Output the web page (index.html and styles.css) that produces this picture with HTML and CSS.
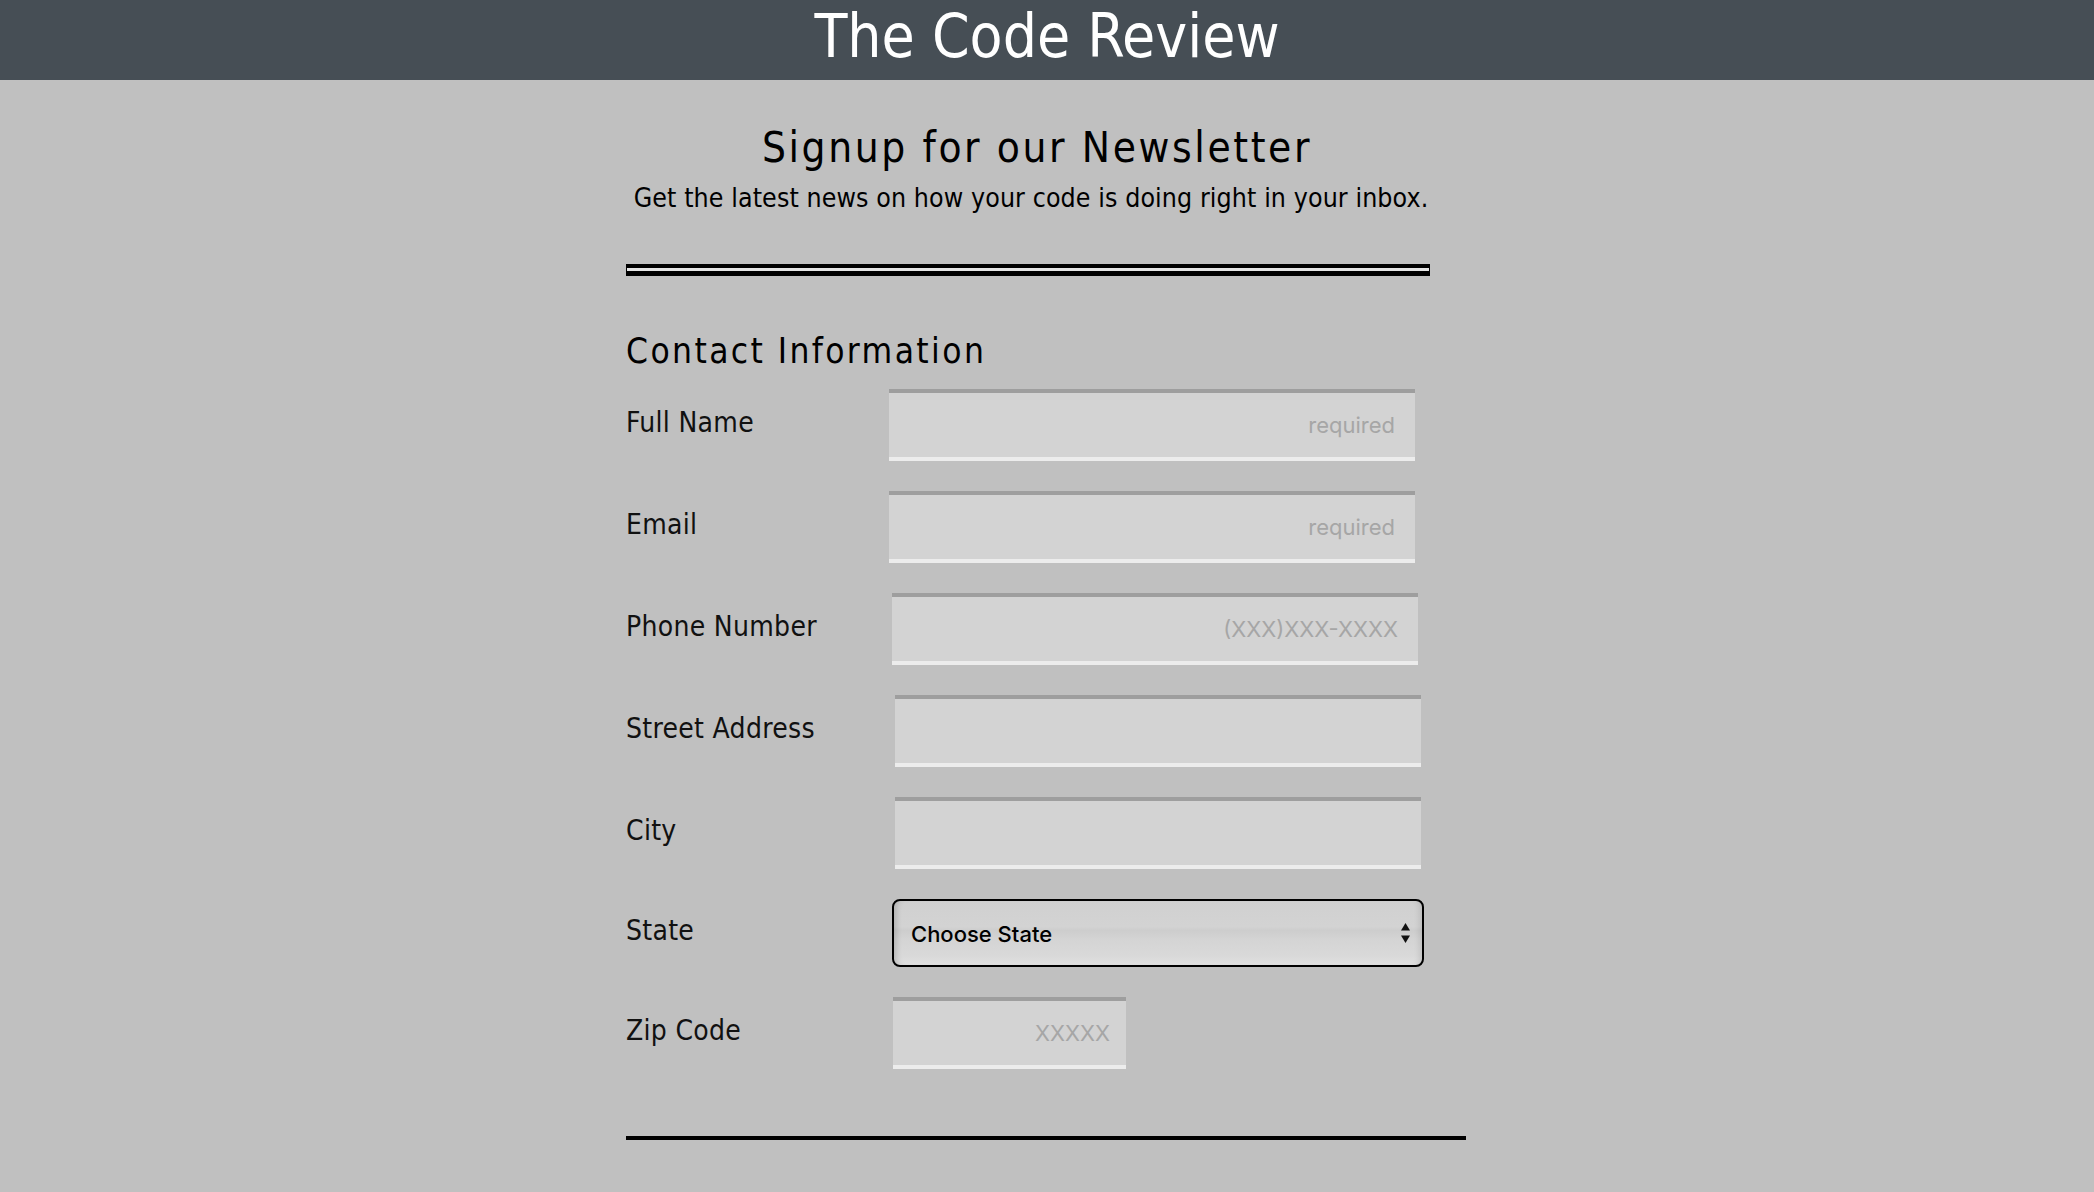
FILE: index.html
```html
<!DOCTYPE html>
<html lang="en">
<head>
<meta charset="utf-8">
<title>The Code Review</title>
<link rel="stylesheet" href="styles.css">
</head>
<body>
<header class="site-header">
  <h1 class="site-title">The Code Review</h1>
</header>
<main class="main">
  <div class="intro">
    <h2 class="intro-title">Signup for our Newsletter</h2>
    <p class="intro-text">Get the latest news on how your code is doing right in your inbox.</p>
  </div>
  <hr class="double-rule">
  <h3 class="section-title">Contact Information</h3>
  <form class="form">
    <div class="row">
      <label class="label" for="name">Full Name</label>
      <input class="field" id="name" type="text" placeholder="required">
    </div>
    <div class="row">
      <label class="label" for="email">Email</label>
      <input class="field" id="email" type="email" placeholder="required">
    </div>
    <div class="row row-b">
      <label class="label" for="phone">Phone Number</label>
      <input class="field" id="phone" type="tel" placeholder="(XXX)XXX-XXXX">
    </div>
    <div class="row row-c">
      <label class="label" for="street">Street Address</label>
      <input class="field" id="street" type="text">
    </div>
    <div class="row row-c">
      <label class="label" for="city">City</label>
      <input class="field" id="city" type="text">
    </div>
    <div class="row row-b row-select">
      <label class="label" for="state">State</label>
      <div class="select-wrap">
        <select class="select" id="state">
          <option>Choose State</option>
        </select>
        <svg class="select-arrow" width="11" height="22" viewBox="0 0 11 22"><path d="M5.5 1 L10 8.5 L1 8.5 Z" fill="#111"/><path d="M5.5 21 L10 13.5 L1 13.5 Z" fill="#111"/></svg>
      </div>
    </div>
    <div class="row row-z">
      <label class="label" for="zip">Zip Code</label>
      <input class="field field-zip" id="zip" type="text" placeholder="XXXXX">
    </div>
  </form>
  <hr class="bottom-rule">
</main>
</body>
</html>
```

FILE: styles.css
```css
html, body {
  margin: 0;
  padding: 0;
}
body {
  background: #c0c0c0;
  font-family: "DejaVu Sans Condensed", "DejaVu Sans", sans-serif;
  color: #000;
  min-height: 1192px;
}
.site-header {
  background: #464e55;
  height: 80px;
  box-sizing: border-box;
  padding-bottom: 8px;
}
.site-title {
  margin: 0;
  text-align: center;
  color: #fff;
  font-weight: normal;
  font-size: 60px;
  line-height: 72px;
  letter-spacing: 0;
}
.main {
  margin-left: 626px;
  width: 840px;
}
.intro {
  width: 804px;
  text-align: center;
  padding-left: 18px;
  box-sizing: border-box;
}
.intro-title {
  margin: 43px 0 0;
  font-weight: normal;
  font-size: 42px;
  line-height: 50px;
  letter-spacing: 2.6px;
}
.intro-text {
  margin: 7px 0 0 -12px;
  font-size: 26.5px;
  line-height: 36px;
  letter-spacing: 0.1px;
  white-space: nowrap;
}
.double-rule {
  margin: 48px 0 0;
  width: 802px;
  height: 3px;
  box-sizing: content-box;
  background: #e4e4e4;
  border: 1px solid #000;
  border-top-width: 4px;
  border-bottom-width: 5px;
  padding: 0;
}
.section-title {
  margin: 53px 0 0;
  font-weight: normal;
  font-size: 35px;
  line-height: 44px;
  letter-spacing: 2.4px;
}
.form {
  margin-top: 16px;
  display: flex;
  flex-direction: column;
  gap: 30px;
}
.row {
  display: grid;
  grid-template-columns: 263px auto;
  align-items: center;
  justify-items: start;
}
.row-b { grid-template-columns: 266px auto; }
.row-c { grid-template-columns: 269px auto; }
.row-z { grid-template-columns: 267px auto; }
.label {
  font-size: 28px;
  line-height: 36px;
  letter-spacing: 0.3px;
  color: #111;
  margin-bottom: 4px;
}
.field {
  width: 526px;
  height: 72px;
  box-sizing: border-box;
  margin: 0;
  background: #d3d3d3;
  border: 0;
  border-top: 4px solid #9e9e9e;
  border-bottom: 4px solid #ececec;
  padding: 0 20px 0 14px;
  text-align: right;
  font-family: Inter, "Open Sans", sans-serif;
  font-size: 22px;
  color: #222;
  outline: none;
}
.field::placeholder {
  color: #a6a6a6;
  opacity: 1;
}
.field-zip {
  width: 233px;
  padding-right: 16px;
}
.select-wrap {
  position: relative;
  width: 532px;
  height: 68px;
}
.select {
  appearance: none;
  -webkit-appearance: none;
  width: 532px;
  height: 68px;
  box-sizing: border-box;
  margin: 0;
  border: 2px solid #000;
  border-radius: 8px;
  padding: 2px 40px 0 17px;
  font-family: Inter, "Open Sans", sans-serif;
  font-size: 22px;
  font-weight: 500;
  color: #000;
  background: linear-gradient(#d0d0d0 0%, #d3d3d3 40%, #cdcdcd 46%, #d4d4d4 60%, #d9d9d9 85%, #e0e0e0 100%);
  box-shadow: inset 7px 0 6px -5px rgba(0, 0, 0, 0.18), inset -7px 0 6px -5px rgba(0, 0, 0, 0.12);
  outline: none;
}
.select-arrow {
  position: absolute;
  right: 13px;
  top: 23px;
  pointer-events: none;
}
.bottom-rule {
  margin: 67px 0 0;
  width: 840px;
  height: 0;
  border: 0;
  border-top: 4px solid #000;
  padding: 0;
}
```
